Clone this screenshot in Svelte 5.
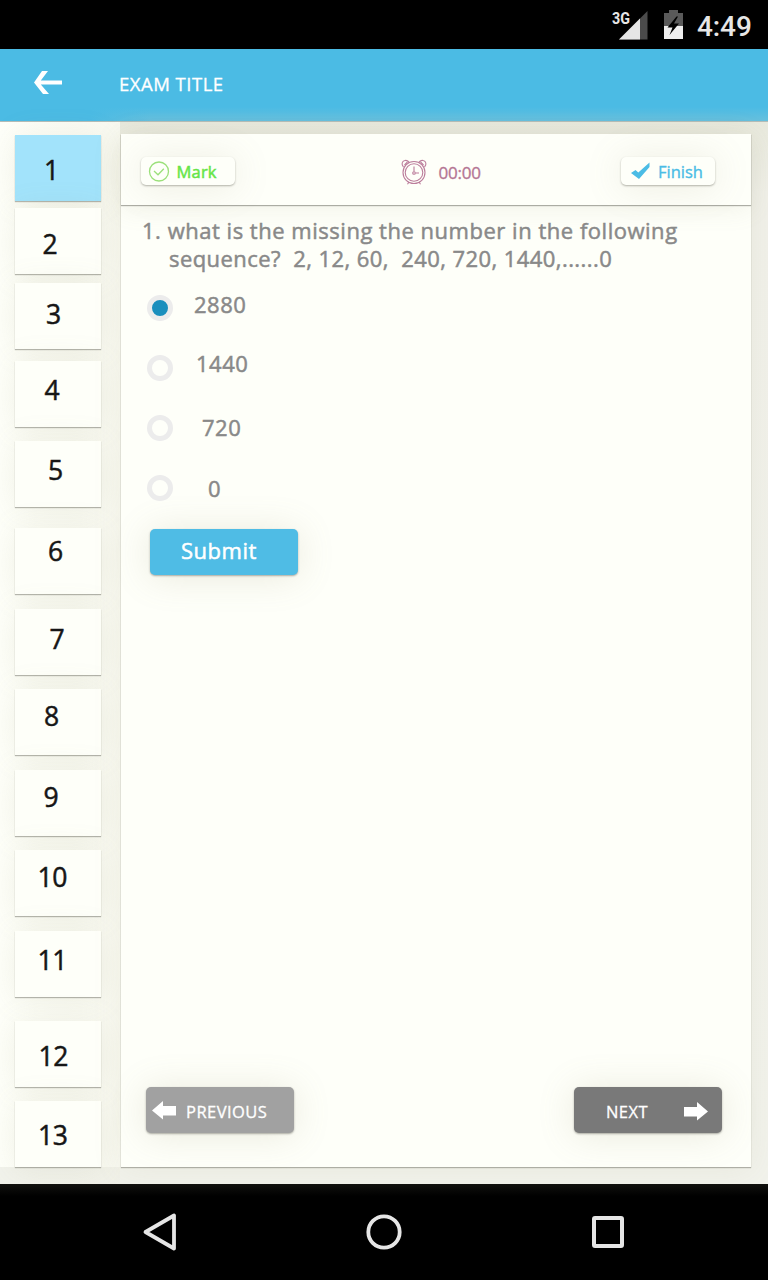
<script>
  const questions = [
    { n: 1, gap: 13, x: 29, y: 36 },
    { n: 2, gap: 7, x: 27.5, y: 37 },
    { n: 3, gap: 9, x: 31, y: 32 },
    { n: 4, gap: 12, x: 29.5, y: 30 },
    { n: 5, gap: 14, x: 33, y: 30 },
    { n: 6, gap: 21, x: 33, y: 24 },
    { n: 7, gap: 15, x: 34.5, y: 31 },
    { n: 8, gap: 14, x: 29, y: 28 },
    { n: 9, gap: 15, x: 28.5, y: 28 },
    { n: 10, gap: 14, x: 22.5, y: 28 },
    { n: 11, gap: 15, x: 22.5, y: 30 },
    { n: 12, gap: 24, x: 23.5, y: 36 },
    { n: 13, gap: 14, x: 23, y: 35 }
  ];
  const options = [
    { label: '2880', x: 21, y: -4 },
    { label: '1440', x: 23, y: -5 },
    { label: '720', x: 29, y: -1 },
    { label: '0', x: 35, y: 0 }
  ];
  let selected = $state(0);
</script>

<div class="screen">
  <header class="status">
    <svg width="37" height="34" viewBox="0 0 37 34">
      <text x="0" y="15.500" class="net" textLength="18" lengthAdjust="spacingAndGlyphs">3G</text>
      <path d="M7 31.500H35.500V3Z" fill="#4b4b4b" />
      <path d="M7 31.500L28 10.500V31.500Z" fill="#e6e6e6" />
    </svg>
    <svg class="battery" width="19" height="30" viewBox="0 0 19 30">
      <path d="M0 3H5V0H14V3H19V16H0Z" fill="#5a5a5a" />
      <path d="M0 16H19V29H0Z" fill="#eee" />
      <path d="M12.500 6.500L3.500 17.500H8.500L5.500 25L15 13.500H10L14 6.500Z" fill="#000" />
    </svg>
    <span class="clock">4:49</span>
  </header>

  <div class="appbar">
    <svg width="30" height="26" viewBox="0 0 30 26">
      <path d="M8 1H14L6.800 10.500H28V14.500H6.800L15 24H9L0 12.500Z" fill="#fff" />
    </svg>
    <span class="title">EXAM TITLE</span>
  </div>

  <main>
    <nav class="side">
      {#each questions as q}
        <button class="num" class:active={q.n === 1} style="margin-top:{q.gap}px;padding-left:{q.x}px;padding-top:{q.y - 16}px">{q.n}</button>
      {/each}
    </nav>

    <div class="content">
      <section class="panel">
        <div class="tools">
          <button class="chip mark">
            <svg width="22" height="22" viewBox="0 0 22 22" fill="none" stroke="#9be07a">
              <circle cx="11" cy="11.500" r="9.500" stroke-width="1.300" />
              <path d="M6 11L10 14.800L15.800 8.700" stroke-width="1.300" />
            </svg>
            <span>Mark</span>
          </button>
          <div class="timer">
            <svg width="26" height="26" viewBox="0 0 26 26" fill="none" stroke="#bb7d9b" stroke-width="1.100">
              <circle cx="13" cy="13.500" r="11" />
              <circle cx="13" cy="13.500" r="8.800" />
              <path d="M2.500 8C0 5.500 1 2 3.800 1.500C6 1 8 2.500 8 4M23.500 8C26 5.500 25 2 22.200 1.500C20 1 18 2.500 18 4M3.500 6L6.500 3M22.500 6L19.500 3" />
              <circle cx="13" cy="14" r="1.300" />
              <path d="M13 12.500V7.500M14.500 14H18M8 23L6.500 25.300M18 23L19.500 25.300" />
            </svg>
            <span>00:00</span>
          </div>
          <button class="chip finish">
            <svg width="20" height="18" viewBox="0 0 20 18">
              <path d="M0 11L4.500 8L7.300 10.500L18.500 0.500V5L8 17Z" fill="#4bbce5" />
            </svg>
            <span>Finish</span>
          </button>
        </div>

        <div class="body">
          <p class="q q1">1. what is the missing the number in the following</p>
          <p class="q q2">sequence?&nbsp; 2, 12, 60,&nbsp; 240, 720, 1440,......0</p>
          <div class="options">
            {#each options as o, i}
              <label class="option">
                <input type="radio" name="answer" checked={selected === i} onchange={() => (selected = i)} />
                <span style="margin-left:{o.x}px;top:{o.y}px">{o.label}</span>
              </label>
            {/each}
          </div>
          <button class="submit">Submit</button>
        </div>

        <div class="pager">
          <button class="prev">
            <svg width="25" height="20" viewBox="0 0 25 20"><path d="M0 9.500L11 0V5H24V14.500H11V18.500Z" fill="#fff" /></svg>
            <span>PREVIOUS</span>
          </button>
          <button class="next">
            <span>NEXT</span>
            <svg width="25" height="20" viewBox="0 0 25 20"><path d="M24 9.500L13 0V5H0V14.500H13V18.500Z" fill="#fff" /></svg>
          </button>
        </div>
      </section>
    </div>
  </main>

  <footer>
    <svg width="36" height="40" viewBox="0 0 36 40"><path d="M3.500 20L32 3.500V36.500Z" fill="none" stroke="#e6e6e6" stroke-width="3.800" stroke-linejoin="round" /></svg>
    <svg width="36" height="36" viewBox="0 0 36 36"><circle cx="17" cy="18" r="15.700" fill="none" stroke="#e6e6e6" stroke-width="3.800" /></svg>
    <svg width="32" height="32" viewBox="0 0 32 32"><rect x="2" y="2" width="28" height="28" rx="1" fill="none" stroke="#e6e6e6" stroke-width="4" stroke-linejoin="round" /></svg>
  </footer>
</div>

<style>
  :global(body) { margin: 0; }
  * { box-sizing: border-box; }
  button { border: 0; margin: 0; padding: 0; font: inherit; color: inherit; letter-spacing: inherit; text-align: left; }
  svg { display: block; flex: none; overflow: visible; }
  .screen {
    width: 768px; height: 1280px; display: flex; flex-direction: column; overflow: hidden;
    font-family: "Open Sans", "Noto Sans", sans-serif; background: #fefff9;
  }
  .status { height: 49px; background: #000; display: flex; padding: 8px 0 0 612px; }
  .net { font: 700 16px Roboto, sans-serif; fill: #e6e6e6; }
  .battery { margin: 2px 0 0 15px; }
  .clock { margin: 1px 0 0 14px; font: 500 28px/36px Roboto, sans-serif; color: #e6e6e6; letter-spacing: -0.100px; }
  .appbar {
    height: 73px; display: flex; align-items: flex-start; padding: 21px 0 0 34px; flex: none;
    background:
      linear-gradient(90deg, #4bbbe4 90px, rgba(75, 187, 228, 0) 150px),
      linear-gradient(#4bbbe4 58px, #67c0dd);
    border-bottom: 1px solid #b4bcb7;
  }
  .title { margin-left: 55px; color: #fff; font-size: 18.500px; line-height: 27px; letter-spacing: 0.500px; -webkit-text-stroke: 0.300px; }
  main { height: 1062px; display: flex; flex: none; background: linear-gradient(#fefff9 1045px, #f1f2eb 1045px); }
  .side {
    width: 120px; padding-left: 15px; display: flex; flex-direction: column;
    background: linear-gradient(90deg, rgba(240, 240, 229, 0), rgba(240, 240, 229, 0.400) 100%);
  }
  .num {
    width: 86px; height: 66px; flex: none; background: #fefff9; color: #161616;
    font-size: 26.500px; letter-spacing: -0.300px; line-height: 30px; -webkit-text-stroke: 0.500px; display: flex; align-items: flex-start;
    box-shadow: 0 1px 1px rgba(80, 80, 70, 0.400), 0 2px 32px rgba(150, 145, 105, 0.120);
  }
  .active { background: #a2e3fb; }
  .content { flex: 1; padding: 12px 17px 17px 1px; background: linear-gradient(#e8e9dd, #f0f0e9 70px, #f1f2eb); }
  .panel {
    height: 1033px; display: flex; flex-direction: column; background: #fefff9;
    box-shadow: 0 1px 1px rgba(80, 80, 70, 0.400), 0 2px 30px rgba(150, 145, 105, 0.090);
  }
  .tools {
    height: 71px; flex: none; display: flex; padding: 23px 36px 0 20px;
    box-shadow: 0 1px 1px rgba(80, 80, 70, 0.450), 0 5px 24px rgba(150, 145, 105, 0.110);
  }
  .chip {
    width: 94px; height: 28px; border-radius: 5px; background: #fefff9; display: flex; align-items: center; font-size: 17px;
    box-shadow: 0 1px 2px rgba(80, 80, 70, 0.420), 0 2px 36px rgba(150, 145, 105, 0.170);
  }
  .mark { color: #66e548; padding-left: 7px; font-size: 16.500px; letter-spacing: 0.200px; -webkit-text-stroke: 0.500px; }
  .mark span { margin: 1px 0 0 6.500px; }
  .finish { color: #4bbce5; padding-left: 10px; font-size: 16.500px; margin-left: auto; -webkit-text-stroke: 0.350px; }
  .finish span { margin: 1px 0 0 7px; }
  .timer { display: flex; padding-top: 3px; margin-left: 166px; color: #b57694; font-size: 17px; line-height: 26px; -webkit-text-stroke: 0.350px; }
  .timer svg { margin-top: -1px; }
  .timer span { margin: 0 0 0 11.500px; letter-spacing: -0.200px; }
  .body { flex: 1; padding: 11px 0 0 20px; color: #898989; font-size: 22px; letter-spacing: 0.520px; -webkit-text-stroke: 0.500px; }
  .q { margin: 0; line-height: 28px; white-space: nowrap; }
  .q1 { padding-left: 1px; }
  .q2 { padding-left: 28px; letter-spacing: 0.430px; }
  .options { margin: 23px 0 0 6px; }
  .option { height: 60px; display: flex; align-items: flex-start; }
  .option input {
    appearance: none; width: 26px; height: 26px; margin: 0; border: 5px solid #ececec;
    border-radius: 50%; flex: none; background: #fefff9;
  }
  .option input:checked { background: #1a8fbd; }
  .option span { position: relative; line-height: 26px; }
  .submit {
    width: 148px; height: 46px; margin: -6px 0 0 9px; padding: 0 0 4px 31px; border-radius: 5px; display: flex; align-items: center;
    background: #4fbce5; color: #fff; font-size: 22px;
    box-shadow: 0 1px 2px rgba(80, 80, 70, 0.450), 0 2px 36px rgba(150, 145, 105, 0.190);
  }
  .pager { display: flex; justify-content: space-between; padding: 0 29px 34px 25px; color: #fff; font-size: 16.500px; letter-spacing: 0.450px; -webkit-text-stroke: 0.300px; }
  .pager button {
    width: 148px; height: 46px; border-radius: 5px; display: flex; align-items: center; padding-top: 2px;
    box-shadow: 0 1px 2px rgba(80, 80, 70, 0.450), 0 2px 36px rgba(150, 145, 105, 0.190);
  }
  .pager .prev { background: #a1a1a1; padding-left: 6px; }
  .prev span { margin-left: 9px; }
  .pager .next { background: #797979; padding: 3px 13px 0 32px; justify-content: space-between; }
  footer {
    flex: 1; background: linear-gradient(#11110e, #000 12px); display: flex; align-items: center;
    justify-content: space-between; padding: 0 144px 0 142px;
  }
</style>
